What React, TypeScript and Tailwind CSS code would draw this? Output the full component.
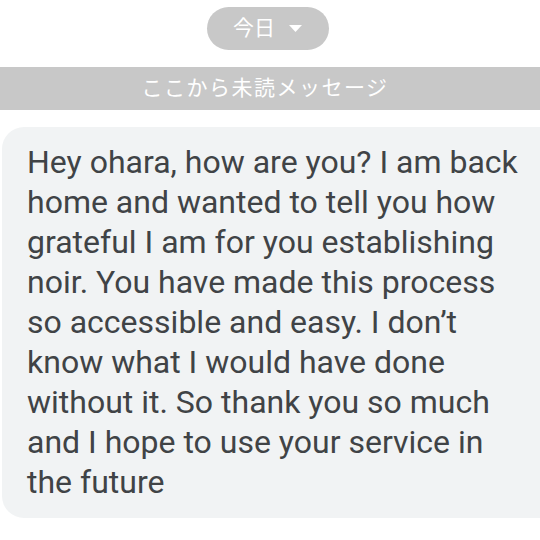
import React from 'react'

const lines = [
  'Hey ohara, how are you? I am back',
  'home and wanted to tell you how',
  'grateful I am for you establishing',
  'noir. You have made this process',
  'so accessible and easy. I don\u2019t',
  'know what I would have done',
  'without it. So thank you so much',
  'and I hope to use your service in',
  'the future',
]

export default function App() {
  return (
    <div className="w-[540px] h-[540px] bg-white overflow-hidden font-['Roboto','Noto_Sans_CJK_JP',sans-serif]">
      <div className="flex justify-center pt-[7px]">
        <div className="flex items-center justify-center gap-[14px] w-[122px] h-[43px] ml-[-5px] rounded-full bg-[#c8c8c8] text-white text-[21px]">
          <span>今日</span>
          <svg width="13" height="8" viewBox="0 0 13 8">
            <path d="M0 0 L13 0 L6.5 7 Z" fill="white" />
          </svg>
        </div>
      </div>
      <div className="mt-[17px] h-[43px] bg-[#c8c8c8] flex items-center justify-center text-white text-[21px] tracking-[1.5px] pr-[10px]">
        ここから未読メッセージ
      </div>
      <div className="mt-[17px] ml-[2px] w-[560px] rounded-[22px] bg-[#f1f3f4] pt-[15px] pb-[16px] pl-[25px] text-[#404346] text-[32px] leading-[40px]">
        {lines.map((l, i) => (
          <div key={i} className="whitespace-nowrap">{l}</div>
        ))}
      </div>
    </div>
  )
}
